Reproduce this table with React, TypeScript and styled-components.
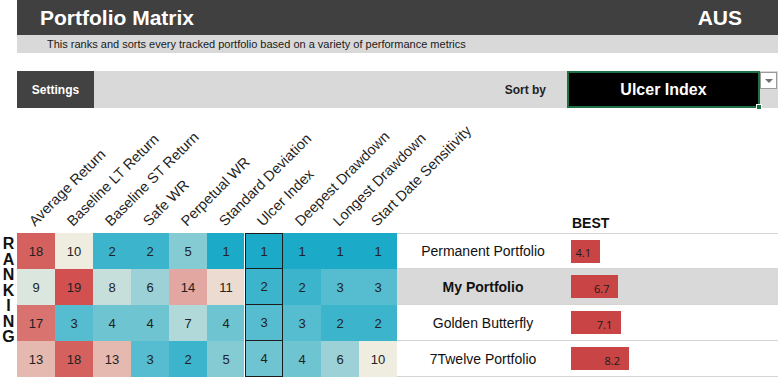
import styled, { createGlobalStyle } from "styled-components";

const GlobalStyle = createGlobalStyle`
  html, body {
    margin: 0;
    padding: 0;
    background: #fff;
  }
  body {
    width: 778px;
    height: 378px;
    overflow: hidden;
    font-family: "Liberation Sans", Arial, sans-serif;
    color: #1a1a1a;
  }
`;

type Portfolio = {
  name: string;
  ranks: number[];
  best: number;
  mine?: boolean;
};

const METRICS = [
  "Average Return",
  "Baseline LT Return",
  "Baseline ST Return",
  "Safe WR",
  "Perpetual WR",
  "Standard Deviation",
  "Ulcer Index",
  "Deepest Drawdown",
  "Longest Drawdown",
  "Start Date Sensitivity",
];

const SORT_COLUMN = 6;

const PORTFOLIOS: Portfolio[] = [
  { name: "Permanent Portfolio", ranks: [18, 10, 2, 2, 5, 1, 1, 1, 1, 1], best: 4.1 },
  { name: "My Portfolio", ranks: [9, 19, 8, 6, 14, 11, 2, 2, 3, 3], best: 6.7, mine: true },
  { name: "Golden Butterfly", ranks: [17, 3, 4, 4, 7, 4, 3, 3, 2, 2], best: 7.1 },
  { name: "7Twelve Portfolio", ranks: [13, 18, 13, 3, 2, 5, 4, 4, 6, 10], best: 8.2 },
];

// 3 colour scale: 1 = teal, 10 = cream, 19 = red
const TEAL = [27, 170, 200];
const CREAM = [239, 236, 224];
const RED = [210, 80, 79];

const mix = (a: number[], b: number[], t: number) =>
  `rgb(${a.map((v, i) => Math.round(v + (b[i] - v) * t)).join(",")})`;

const rankColor = (rank: number) => {
  if (rank <= 10) return mix(TEAL, CREAM, Math.pow((rank - 1) / 9, 0.85));
  return mix(CREAM, RED, Math.min(1, (rank - 10) / 9));
};

export default function App() {
  return (
    <>
      <GlobalStyle />
      <Page>
        <TitleBar>
          <span>Portfolio Matrix</span>
          <span>AUS</span>
        </TitleBar>
        <Subtitle>
          This ranks and sorts every tracked portfolio based on a variety of performance metrics
        </Subtitle>

        <Toolbar>
          <SettingsButton>Settings</SettingsButton>
          <Spacer />
          <SortLabel>Sort by</SortLabel>
          <SortSelect>
            Ulcer Index
            <SelectHandle />
          </SortSelect>
          <DropButton>
            <Caret />
          </DropButton>
        </Toolbar>

        <HeaderRow>
          {METRICS.map((m) => (
            <LabelCell key={m}>
              <RotatedLabel>{m}</RotatedLabel>
            </LabelCell>
          ))}
          <NameHead />
          <BestHead>BEST</BestHead>
        </HeaderRow>

        <Body>
          <RankingLabel>
            {"RANKING".split("").map((ch, i) => (
              <span key={i}>{ch}</span>
            ))}
          </RankingLabel>
          <Table>
            {PORTFOLIOS.map((p, rowIndex) => (
              <Row key={p.name}>
                {p.ranks.map((rank, col) => (
                  <RankCell
                    key={col}
                    $bg={rankColor(rank)}
                    $sorted={col === SORT_COLUMN}
                    $first={rowIndex === 0}
                  >
                    {rank}
                  </RankCell>
                ))}
                <RowTail $shaded={!!p.mine} $first={rowIndex === 0}>
                  <NameCell $bold={!!p.mine}>{p.name}</NameCell>
                  <BestCell>
                    <Bar style={{ width: `${p.best * 7.08}px` }}>{p.best.toFixed(1)}</Bar>
                  </BestCell>
                </RowTail>
              </Row>
            ))}
          </Table>
        </Body>
      </Page>
    </>
  );
}

const Page = styled.div`
  display: flex;
  flex-direction: column;
  width: 778px;
`;

const TitleBar = styled.div`
  margin-left: 17px;
  height: 35px;
  padding: 0 36px 0 23px;
  background: #404040;
  color: #fff;
  display: flex;
  align-items: center;
  justify-content: space-between;
  font-size: 21px;
  font-weight: 700;
`;

const Subtitle = styled.div`
  margin-left: 17px;
  height: 18px;
  line-height: 18px;
  padding-left: 30px;
  background: #d9d9d9;
  font-size: 11px;
  color: #1a1a1a;
`;

const Toolbar = styled.div`
  margin: 18px 0 0 17px;
  height: 37px;
  background: #d9d9d9;
  display: flex;
  align-items: center;
`;

const SettingsButton = styled.div`
  width: 77px;
  height: 100%;
  background: #424242;
  color: #fff;
  font-size: 12px;
  font-weight: 700;
  display: flex;
  align-items: center;
  justify-content: center;
`;

const Spacer = styled.div`
  flex: 1;
`;

const SortLabel = styled.div`
  margin-right: 21px;
  font-size: 12px;
  font-weight: 700;
  color: #222;
`;

const SortSelect = styled.div`
  position: relative;
  width: 193px;
  height: 100%;
  box-sizing: border-box;
  border: 2px solid #1e7145;
  background: #000;
  color: #fff;
  font-size: 16px;
  font-weight: 700;
  display: flex;
  align-items: center;
  justify-content: center;
`;

const SelectHandle = styled.div`
  position: absolute;
  right: -4px;
  bottom: -4px;
  width: 4px;
  height: 4px;
  background: #1e7145;
  border: 1px solid #fff;
`;

const DropButton = styled.div`
  align-self: flex-start;
  margin: 1px 1px 0 0;
  width: 17px;
  height: 17px;
  box-sizing: border-box;
  border: 1px solid #9a9a9a;
  background: #fff;
  display: flex;
  align-items: center;
  justify-content: center;
`;

const Caret = styled.div`
  width: 0;
  height: 0;
  border-left: 4px solid transparent;
  border-right: 4px solid transparent;
  border-top: 4px solid #707070;
`;

const HeaderRow = styled.div`
  margin-left: 17px;
  height: 125px;
  display: flex;
  align-items: flex-end;
`;

const LabelCell = styled.div`
  width: 38px;
  flex-shrink: 0;
  padding-bottom: 3px;
`;

const RotatedLabel = styled.span`
  display: inline-block;
  margin-left: 20px;
  white-space: nowrap;
  font-size: 14.5px;
  line-height: 16px;
  color: #1f1f1f;
  transform-origin: 0 100%;
  transform: rotate(-45deg);
`;

const NameHead = styled.div`
  width: 172px;
  flex-shrink: 0;
`;

const BestHead = styled.div`
  padding: 0 0 2px 3px;
  font-size: 14px;
  font-weight: 700;
  color: #111;
`;

const Body = styled.div`
  display: flex;
`;

const RankingLabel = styled.div`
  width: 17px;
  padding-top: 3px;
  display: flex;
  flex-direction: column;
  align-items: center;
  font-size: 16px;
  font-weight: 700;
  line-height: 15.5px;
  color: #111;
`;

const Table = styled.div`
  flex: 1;
  display: flex;
  flex-direction: column;
`;

const Row = styled.div`
  display: flex;
  height: 36px;
`;

const RankCell = styled.div<{ $bg: string; $sorted: boolean; $first: boolean }>`
  width: 38px;
  flex-shrink: 0;
  box-sizing: border-box;
  background: ${(p) => p.$bg};
  display: flex;
  align-items: center;
  justify-content: center;
  font-size: 13px;
  color: #222;
  ${(p) =>
    p.$sorted &&
    `
    border: 1px solid #1c1c1c;
    border-top: ${p.$first ? "1px solid #1c1c1c" : "none"};
    box-shadow: -1px 0 0 #fff;
  `}
`;

const RowTail = styled.div<{ $shaded: boolean; $first: boolean }>`
  flex: 1;
  display: flex;
  box-sizing: border-box;
  background: ${(p) => (p.$shaded ? "#d9d9d9" : "#fff")};
  border-bottom: 1px solid #d4d4d4;
  border-top: ${(p) => (p.$first ? "1px solid #d4d4d4" : "none")};
`;

const NameCell = styled.div<{ $bold: boolean }>`
  width: 172px;
  flex-shrink: 0;
  display: flex;
  align-items: center;
  justify-content: center;
  font-size: 14px;
  font-weight: ${(p) => (p.$bold ? 700 : 400)};
  color: #111;
`;

const BestCell = styled.div`
  flex: 1;
  padding-left: 2px;
  display: flex;
  align-items: center;
`;

const Bar = styled.div`
  height: 23px;
  box-sizing: border-box;
  padding: 3px 9px 0 0;
  background: #c94444;
  display: flex;
  align-items: center;
  justify-content: flex-end;
  font-family: "Open Sans", "Liberation Sans", sans-serif;
  font-size: 11px;
  color: #1a1a1a;
`;
